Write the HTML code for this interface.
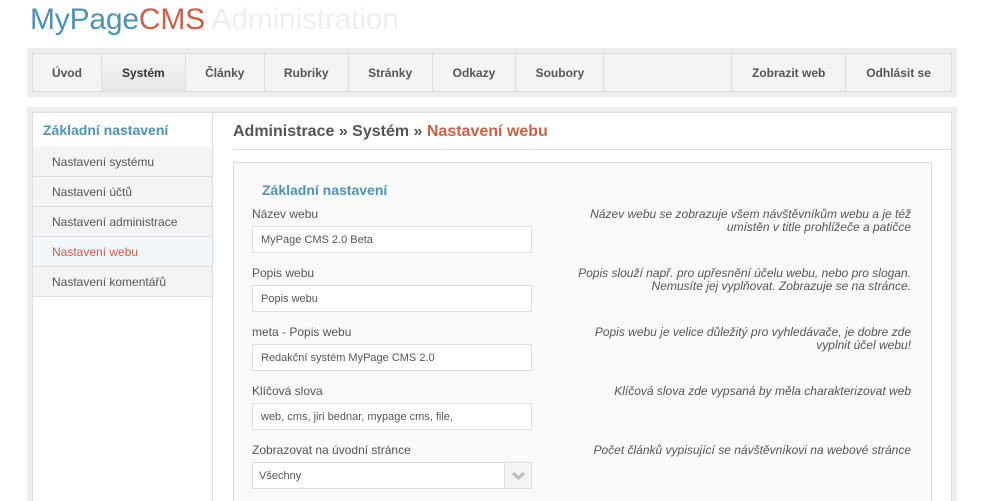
<!DOCTYPE html>
<html style="height:501px;overflow:hidden"><head><meta charset="utf-8"><style>
*{margin:0;padding:0;box-sizing:border-box}
body{width:985px;height:501px;overflow:hidden;background:#fff;font-family:"Liberation Sans",Arial,sans-serif;position:relative;color:#444}
.abs{position:absolute}
.logo{left:30px;top:3px;font-size:30px;white-space:nowrap;letter-spacing:-0.2px}
.nav{left:27px;top:48px;width:930px;height:49px;background:#eee}
.navin{left:5px;top:5px;width:920px;height:39px;background:#f4f4f4;border:1px solid #ddd;display:flex}
.navin div{border-right:1px solid #ddd;font-size:12px;font-weight:bold;color:#555;display:flex;align-items:center;justify-content:center;height:100%}
.main{left:27px;top:107px;width:930px;height:394px;background:#eee;overflow:hidden}
.mainin{left:5px;top:5px;width:920px;height:389px;background:#fff;border:1px solid #ddd;border-bottom:none;overflow:hidden}
.side{left:0;top:0;width:180px;height:389px;border-right:1px solid #ddd}
.sh{padding:9px 0 0 10px;height:34px;font-size:14px;font-weight:bold;color:#4e93b1}
.si{height:30px;border-bottom:1px solid #ddd;background:#f4f4f4;padding-left:19px;font-size:12px;line-height:30px;color:#555}
.lbl{font-size:12px;color:#555}
.inp{width:280px;height:27px;border:1px solid #ddd;background:#fff;font-size:11px;color:#555;padding-left:8px;line-height:26px}
.help{font-size:12px;font-style:italic;color:#555;text-align:right;width:345px;line-height:13px}
</style></head><body>
<div class="abs logo"><span style="color:#4e93b1">MyPage</span><span style="color:#c9604a">CMS</span> <span style="color:#eee">Administration</span></div>
<div class="abs nav"><div class="abs navin">
<div style="width:69px">Úvod</div>
<div style="width:84px;background:linear-gradient(#f4f4f4,#e6e6e6);color:#333">Systém</div>
<div style="width:79px">Články</div>
<div style="width:84px">Rubriky</div>
<div style="width:84px">Stránky</div>
<div style="width:84px">Odkazy</div>
<div style="width:88px">Soubory</div>
<div style="width:128px"></div>
<div style="width:114px">Zobrazit web</div>
<div style="width:105px;border-right:none">Odhlásit se</div>
</div></div>
<div class="abs main"><div class="abs mainin">
<div class="abs side">
<div class="sh">Základní nastavení</div>
<div class="si">Nastavení systému</div>
<div class="si">Nastavení účtů</div>
<div class="si">Nastavení administrace</div>
<div class="si" style="background:#f0f6f9;color:#c9604a">Nastavení webu</div>
<div class="si">Nastavení komentářů</div>
</div>
<div class="abs" style="left:200px;top:10px;font-size:16px;font-weight:bold;color:#555;white-space:nowrap">Administrace » Systém » <span style="color:#c9604a">Nastavení webu</span></div>
<div class="abs" style="left:200px;top:36px;width:719px;height:1px;background:#ddd"></div>
<div class="abs" style="left:200px;top:49px;width:699px;height:340px;background:#fafafa;border:1px solid #ddd;border-bottom:none"></div>
</div></div>
<div class="abs" style="left:262px;top:182px;font-size:14px;font-weight:bold;color:#4e93b1">Základní nastavení</div>

<div class="abs lbl" style="left:252px;top:207px">Název webu</div>
<div class="abs inp" style="left:252px;top:226px">MyPage CMS 2.0 Beta</div>
<div class="abs help" style="left:566px;top:208px">Název webu se zobrazuje všem návštěvníkům webu a je též umístěn v title prohlížeče a patičce</div>

<div class="abs lbl" style="left:252px;top:266px">Popis webu</div>
<div class="abs inp" style="left:252px;top:285px">Popis webu</div>
<div class="abs help" style="left:566px;top:267px">Popis slouží např. pro upřesnění účelu webu, nebo pro slogan. Nemusíte jej vyplňovat. Zobrazuje se na stránce.</div>

<div class="abs lbl" style="left:252px;top:325px">meta - Popis webu</div>
<div class="abs inp" style="left:252px;top:344px">Redakční systém MyPage CMS 2.0</div>
<div class="abs help" style="left:566px;top:326px;padding-left:10px">Popis webu je velice důležitý pro vyhledávače, je dobre zde vyplnit účel webu!</div>

<div class="abs lbl" style="left:252px;top:384px">Klíčová slova</div>
<div class="abs inp" style="left:252px;top:403px">web, cms, jiri bednar, mypage cms, file,</div>
<div class="abs help" style="left:566px;top:385px">Klíčová slova zde vypsaná by měla charakterizovat web</div>

<div class="abs lbl" style="left:252px;top:443px">Zobrazovat na úvodní stránce</div>
<div class="abs inp" style="left:252px;top:462px;padding-left:6px">Všechny</div>
<div class="abs" style="left:504px;top:463px;width:27px;height:25px;border-left:1px solid #ddd;background:#f4f4f4"><svg width="27" height="25"><path d="M8 10 L13.5 15 L19 10" stroke="#bbb" stroke-width="3" fill="none"/></svg></div>
<div class="abs help" style="left:566px;top:444px">Počet článků vypisující se návštěvníkovi na webové stránce</div>
</body></html>
